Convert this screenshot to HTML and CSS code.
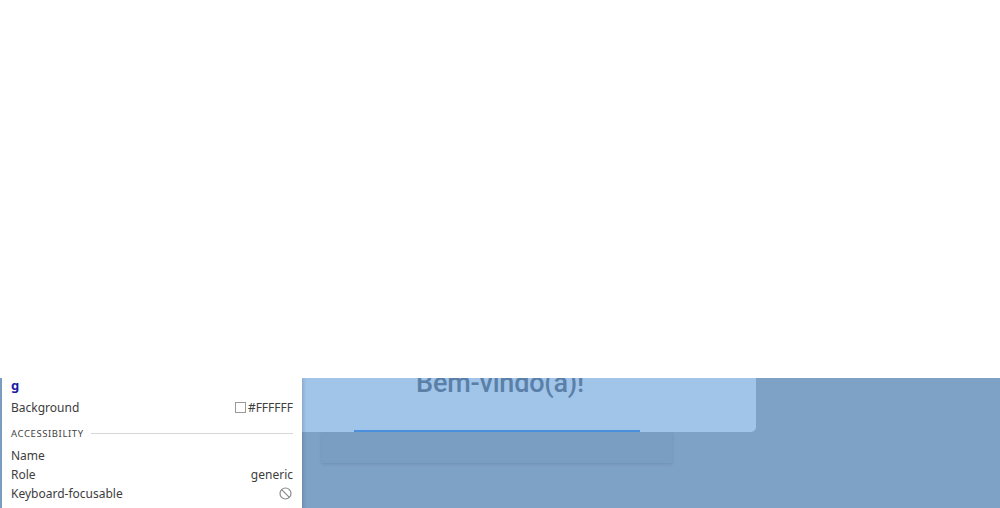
FILE: index.html
```html
<!DOCTYPE html>
<html lang="pt">
<head>
<meta charset="utf-8">
<title>Bem-vindo</title>
<link rel="stylesheet" href="styles.css">
</head>
<body>
<div class="top"></div>
<div class="stage">
  <div class="card">
    <h1 class="welcome">Bem-vindo(a)!</h1>
    <div class="underline"></div>
  </div>
  <div class="box"></div>

  <div class="tooltip">
    <div class="tag">g</div>
    <div class="row mt6"><span>Background</span><span class="val"><span class="swatch"></span>#FFFFFF</span></div>
    <div class="section"><span>ACCESSIBILITY</span><span class="rule"></span></div>
    <div class="row mt5"><span>Name</span><span class="val"></span></div>
    <div class="row"><span>Role</span><span class="val">generic</span></div>
    <div class="row"><span>Keyboard-focusable</span><span class="val">
      <svg class="noicon" width="13" height="13" viewBox="0 0 13 13"><circle cx="6.5" cy="6.5" r="5.5" fill="none" stroke="#8a8a8a" stroke-width="1.2"/><line x1="2.6" y1="2.6" x2="10.4" y2="10.4" stroke="#8a8a8a" stroke-width="1.2"/></svg>
    </span></div>
  </div>
</div>
</body>
</html>
```

FILE: styles.css
```css
html, body {
  margin: 0;
  padding: 0;
  background: #ffffff;
}
.top {
  height: 378px;
  background: #ffffff;
}
.stage {
  position: relative;
  height: 130px;
  background: #7ea1c6;
  overflow: hidden;
}
.card {
  margin-left: 244px;
  width: 512px;
  height: 54px;
  background: #a1c4e9;
  border-radius: 0 0 5px 5px;
  overflow: hidden;
  display: flex;
  flex-direction: column;
  align-items: center;
  position: relative;
  z-index: 1;
}
.welcome {
  margin: -17px 0 0 0;
  font-family: Roboto, "Noto Sans", sans-serif;
  font-weight: 500;
  font-size: 27px;
  line-height: 44px;
  color: #5b80a8;
  letter-spacing: -0.2px;
  flex: 1;
}
.underline {
  align-self: flex-start;
  margin-left: 110px;
  width: 286px;
  height: 2px;
  background: #4a8fdc;
}
.box {
  margin-left: 322px;
  width: 350px;
  height: 31px;
  background: #7a9dc2;
  box-shadow: 0 1px 3px rgba(40, 60, 90, 0.18);
}
.tooltip {
  position: absolute;
  left: 2px;
  top: 0;
  box-sizing: border-box;
  width: 300px;
  height: 140px;
  padding: 0 9px 0 9px;
  background: #ffffff;
  box-shadow: 1px 0 4px rgba(0, 0, 0, 0.2);
  z-index: 2;
  font-family: "Noto Sans", "Open Sans", sans-serif;
  font-size: 12px;
  color: #3d3d3d;
}
.tag {
  height: 14px;
  line-height: 14px;
  font-weight: bold;
  color: #1a1aa6;
  font-size: 13px;
}
.row {
  display: flex;
  justify-content: space-between;
  align-items: center;
  height: 19px;
  line-height: 19px;
}
.mt6 { margin-top: 6px; }
.mt5 { margin-top: 5px; }
.val {
  display: flex;
  align-items: center;
}
.swatch {
  width: 9px;
  height: 9px;
  border: 1px solid #9a9a9a;
  background: #ffffff;
  margin-right: 2px;
}
.noicon {
  display: block;
  margin-right: 1px;
}
.section {
  display: flex;
  align-items: center;
  margin-top: 8px;
  height: 16px;
  font-size: 9.5px;
  letter-spacing: 0.6px;
  color: #444;
}
.rule {
  flex: 1;
  height: 1px;
  background: #d6d6d6;
  margin-left: 7px;
}
```
